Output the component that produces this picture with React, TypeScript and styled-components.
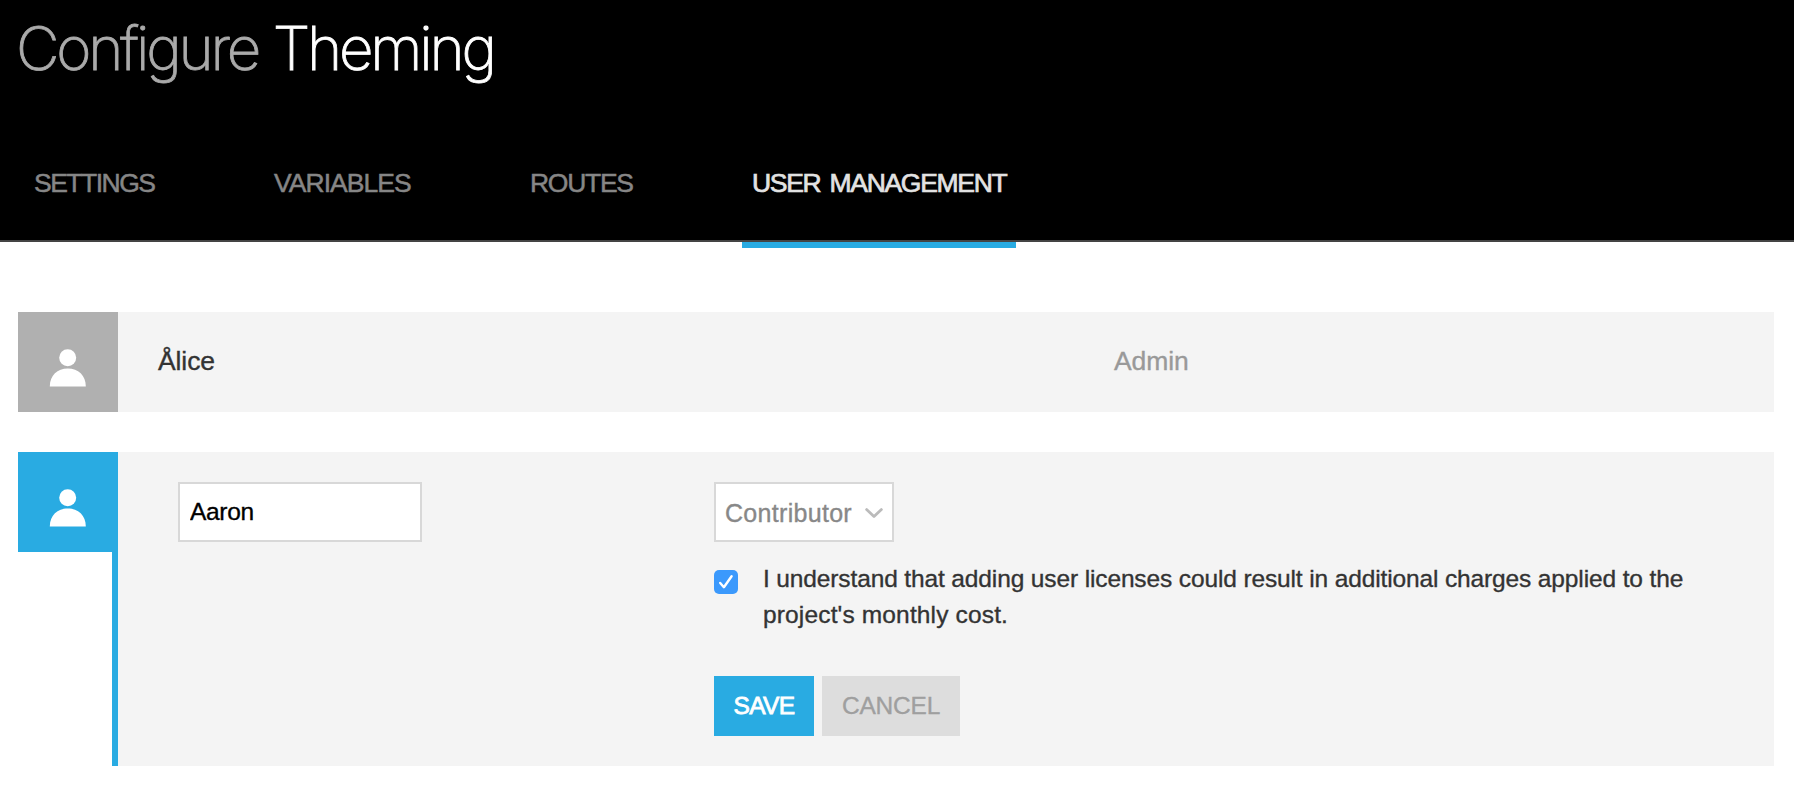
import React, { useState } from "react";
import styled, { createGlobalStyle } from "styled-components";

const BLUE = "#29abe2";

const GlobalStyle = createGlobalStyle`
  *, *::before, *::after { box-sizing: border-box; }
  body {
    margin: 0;
    background: #fff;
    color: #333;
    font-family: "Liberation Sans", Arial, sans-serif;
    -webkit-text-stroke: 0.35px currentColor;
  }
  button, input { font-family: inherit; }
`;

const Header = styled.header`
  display: flex;
  flex-direction: column;
  height: 242px;
  background: #000;
  border-bottom: 2px solid #444;
`;

const Title = styled.h1`
  margin: 0;
  padding-left: 16px;
  font: 200 60px/96px Inter, sans-serif;
  letter-spacing: -3.25px;
  word-spacing: 1px;
  color: #aaa;
  white-space: nowrap;
  -webkit-text-stroke: 0.8px currentColor;
`;

const TitleName = styled.span`
  color: #fff;
  letter-spacing: -3.2px;
  -webkit-text-stroke: 0.8px currentColor;
`;

const Tabs = styled.nav`
  display: flex;
  margin-top: 28px;
  padding-left: 24px;
`;

const Tab = styled.a<{ $active?: boolean; $track: number; $width: number }>`
  position: relative;
  width: ${(p) => p.$width}px;
  margin-right: 100px;
  padding-left: 10px;
  font-size: 26.5px;
  line-height: 118px;
  letter-spacing: ${(p) => p.$track}px;
  word-spacing: 3px;
  white-space: nowrap;
  color: ${(p) => (p.$active ? "#e2e2e2" : "#868686")};
  -webkit-text-stroke: ${(p) => (p.$active ? 0.7 : 0.5)}px currentColor;

  &::after {
    content: "";
    display: ${(p) => (p.$active ? "block" : "none")};
    position: absolute;
    left: 0;
    right: 0;
    top: 118px;
    height: 6px;
    background: ${BLUE};
  }
`;

const Users = styled.main`
  display: flex;
  flex-direction: column;
  gap: 40px;
  padding: 70px 20px 24px 18px;
`;

const UserRow = styled.section<{ $editing?: boolean }>`
  display: flex;
  min-height: ${(p) => (p.$editing ? 314 : 100)}px;
`;

const Rail = styled.div`
  display: flex;
  flex-direction: column;
  align-items: flex-end;
  width: 100px;
`;

const Avatar = styled.div<{ $color: string }>`
  display: flex;
  justify-content: center;
  width: 100px;
  height: 100px;
  padding-top: 37px;
  background: ${(p) => p.$color};
`;

const RailLine = styled.div`
  flex: 1;
  width: 6px;
  background: ${BLUE};
`;

const RowBody = styled.div`
  display: flex;
  flex: 1;
  background: #f4f4f4;
`;

const UserName = styled.div`
  width: 996px;
  padding-left: 40px;
  font-size: 26.5px;
  line-height: 98px;
  letter-spacing: -0.1px;
`;

const UserRole = styled.div`
  font-size: 26.5px;
  line-height: 98px;
  letter-spacing: -0.1px;
  color: #999;
`;

const NameCell = styled.div`
  width: 596px;
  padding: 30px 0 0 60px;
`;

const AccessCell = styled.div`
  display: flex;
  flex-direction: column;
  align-items: flex-start;
  width: 980px;
  padding-top: 30px;
`;

const NameInput = styled.input`
  display: block;
  width: 244px;
  height: 60px;
  padding: 0 10px 1px;
  border: 2px solid #d8d8d8;
  border-radius: 0;
  outline: none;
  background: #fff;
  color: #000;
  font-size: 24.5px;
  letter-spacing: -0.3px;
`;

const RoleSelect = styled.button`
  display: flex;
  align-items: center;
  justify-content: space-between;
  width: 180px;
  height: 60px;
  padding: 3px 9px 0 9px;
  border: 2px solid #d8d8d8;
  background: #fff;
  color: #888;
  font-size: 25px;
  letter-spacing: 0.3px;
`;

const Consent = styled.div`
  display: flex;
  align-items: flex-start;
  margin-top: 19px;
`;

const Check = styled.button`
  display: flex;
  width: 24px;
  height: 24px;
  margin: 9px 25px 0 0;
  padding: 0;
  border: 0;
  border-radius: 5px;
  background: #3b99fc;
`;

const ConsentText = styled.p`
  margin: 0;
  font-size: 24.5px;
  line-height: 36px;
`;

const Line = styled.span<{ $track: number }>`
  display: block;
  letter-spacing: ${(p) => p.$track}px;
  white-space: nowrap;
`;

const Actions = styled.div`
  display: flex;
  gap: 8px;
  margin-top: 43px;
`;

const Action = styled.button<{ $primary?: boolean }>`
  width: ${(p) => (p.$primary ? 100 : 138)}px;
  height: 60px;
  padding: 0;
  border: 0;
  background: ${(p) => (p.$primary ? BLUE : "#ddd")};
  color: ${(p) => (p.$primary ? "#fff" : "#9f9f9f")};
  font-size: 24.5px;
  letter-spacing: ${(p) => (p.$primary ? -0.6 : -0.2)}px;
  -webkit-text-stroke: ${(p) => (p.$primary ? 0.8 : 0.35)}px currentColor;
`;

const Person = () => (
  <svg width="38" height="40" viewBox="0 0 38 40" fill="#fff" aria-hidden="true">
    <circle cx="18.7" cy="8.7" r="8.5" />
    <path d="M.8 37.6C.8 26.4 8.4 19.6 18.8 19.6S36.8 26.4 36.8 37.6Z" />
  </svg>
);

const tabs = [
  { label: "SETTINGS", track: -1.5, width: 140 },
  { label: "VARIABLES", track: -0.95, width: 156 },
  { label: "ROUTES", track: -1.28, width: 122 },
  { label: "USER MANAGEMENT", track: -1.3, width: 274, active: true },
];

export default function App() {
  const [name, setName] = useState("Aaron");
  const [agreed, setAgreed] = useState(true);

  return (
    <>
      <GlobalStyle />
      <Header>
        <Title>
          Configure <TitleName>Theming</TitleName>
        </Title>
        <Tabs>
          {tabs.map((t) => (
            <Tab key={t.label} $active={t.active} $track={t.track} $width={t.width}>
              {t.label}
            </Tab>
          ))}
        </Tabs>
      </Header>
      <Users>
        <UserRow>
          <Rail>
            <Avatar $color="#b0b0b0">
              <Person />
            </Avatar>
          </Rail>
          <RowBody>
            <UserName>Ålice</UserName>
            <UserRole>Admin</UserRole>
          </RowBody>
        </UserRow>
        <UserRow $editing>
          <Rail>
            <Avatar $color={BLUE}>
              <Person />
            </Avatar>
            <RailLine />
          </Rail>
          <RowBody>
            <NameCell>
              <NameInput value={name} onChange={(e) => setName(e.target.value)} />
            </NameCell>
            <AccessCell>
              <RoleSelect type="button">
                Contributor
                <svg width="18" height="11" viewBox="0 0 18 11" fill="none" stroke="#bbb" strokeWidth="2.8" strokeLinecap="round" strokeLinejoin="round">
                  <path d="M1.6 1.6 9 8.6l7.4-7" />
                </svg>
              </RoleSelect>
              <Consent>
                <Check type="button" role="checkbox" aria-checked={agreed} onClick={() => setAgreed(!agreed)}>
                  {agreed && (
                    <svg width="24" height="24" viewBox="0 0 24 24" fill="none" stroke="#fff" strokeWidth="2.4" strokeLinecap="round" strokeLinejoin="round">
                      <path d="M6.2 13 9.9 17.2 17.6 6.2" />
                    </svg>
                  )}
                </Check>
                <ConsentText>
                  <Line $track={-0.13}>
                    I understand that adding user licenses could result in additional charges applied to the
                  </Line>
                  <Line $track={0.15}>project's monthly cost.</Line>
                </ConsentText>
              </Consent>
              <Actions>
                <Action type="button" $primary>
                  SAVE
                </Action>
                <Action type="button">CANCEL</Action>
              </Actions>
            </AccessCell>
          </RowBody>
        </UserRow>
      </Users>
    </>
  );
}
